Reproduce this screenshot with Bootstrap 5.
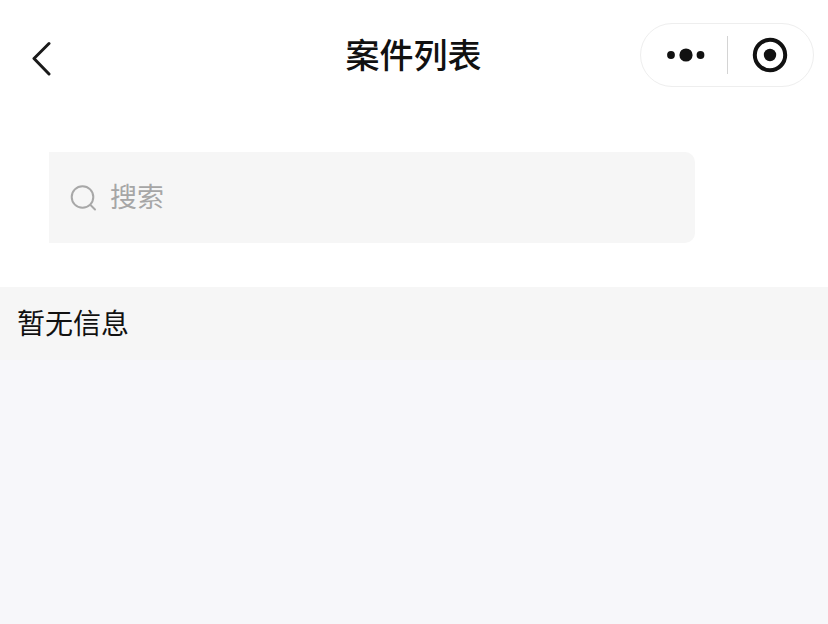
<!DOCTYPE html>
<html lang="zh-CN">
<head>
<meta charset="utf-8">
<title>案件列表</title>
<link href="https://cdn.jsdelivr.net/npm/bootstrap@5.3.0/dist/css/bootstrap.min.css" rel="stylesheet">
<style>
html,body{height:100%;}
body{width:828px;height:624px;overflow:hidden;background:#f7f7fa;font-family:"Noto Sans CJK SC","Liberation Sans",sans-serif;color:#111;}
.top-area{background:#fff;height:287px;}
.title-bar{height:110px;position:relative;}
.back-btn{width:84px;height:110px;padding-left:31px;padding-top:40px;}
.page-title{font-size:34px;font-weight:500;line-height:44px;position:absolute;left:-1px;right:0;top:32px;text-align:center;color:#111;margin:0;}
.capsule{position:absolute;left:640px;top:23px;width:174px;height:64px;border:1px solid #eeeeee;border-radius:32px;background:#fff;}
.cap-left{width:86px;padding-left:4px;}
.cap-div{width:1px;height:38px;background:#d4d4d4;}
.cap-right{width:86px;}
.search-wrap{padding:42px 133px 0 49px;}
.search-box{height:91px;background:#f6f6f6;border-radius:0 10px 10px 0;padding-left:21px;}
.search-text{font-size:27px;line-height:1;color:#a6a6a6;margin-left:13px;margin-top:-5px;}
.empty-bar{height:73px;background:#f6f6f6;padding-left:17px;padding-top:16px;}
.empty-text{font-size:28px;line-height:38px;color:#111;margin:0;}
</style>
</head>
<body>
<div class="top-area">
  <div class="title-bar">
    <div class="back-btn">
      <svg width="22" height="36" viewBox="0 0 22 36" fill="none"><path d="M18 3.5 L3 18.5 L18 34" stroke="#1a1a1a" stroke-width="3" stroke-linecap="round" stroke-linejoin="round"/></svg>
    </div>
    <h1 class="page-title">案件列表</h1>
    <div class="capsule d-flex align-items-center">
      <div class="cap-left d-flex justify-content-center">
        <svg width="40" height="16" viewBox="0 0 40 16"><circle cx="5" cy="8" r="3.9" fill="#111"/><circle cx="20" cy="8" r="6.6" fill="#111"/><circle cx="34.5" cy="8" r="3.9" fill="#111"/></svg>
      </div>
      <div class="cap-div"></div>
      <div class="cap-right d-flex justify-content-center">
        <svg width="36" height="36" viewBox="0 0 36 36"><circle cx="18" cy="18" r="15.2" fill="none" stroke="#111" stroke-width="4"/><circle cx="18" cy="18" r="6.2" fill="#111"/></svg>
      </div>
    </div>
  </div>
  <div class="search-wrap">
    <div class="search-box d-flex align-items-center">
      <svg width="27" height="28" viewBox="0 0 27 28" fill="none"><circle cx="12.5" cy="13" r="10.8" stroke="#a8a8a8" stroke-width="2"/><path d="M20.5 21 L25 25.5" stroke="#a8a8a8" stroke-width="2" stroke-linecap="round"/></svg>
      <span class="search-text">搜索</span>
    </div>
  </div>
</div>
<div class="empty-bar"><p class="empty-text">暂无信息</p></div>
</body>
</html>
